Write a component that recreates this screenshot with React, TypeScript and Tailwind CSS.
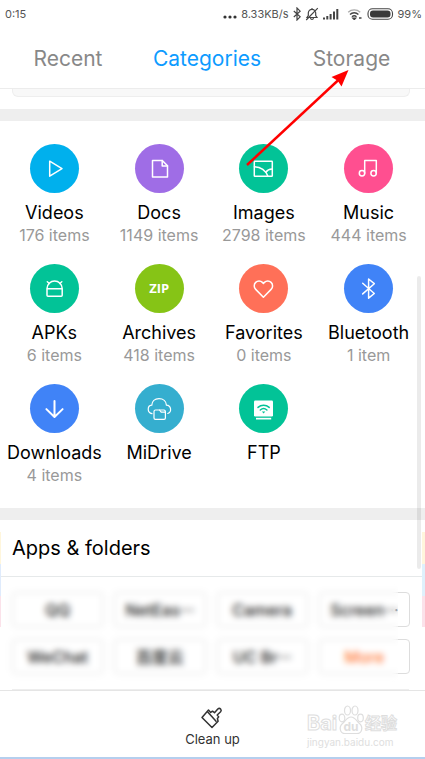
import { useState } from "react"
import type { ReactNode } from "react"
import { clsx } from "clsx"

interface Category {
  name: string
  count?: string
  color: string
  icon: ReactNode
}

const TABS = ["Recent", "Categories", "Storage"]

const FOLDERS = ["QQ", "NetEas···", "Camera", "Screen···", "WeChat", "百度云", "UC Br···", "More"]

const Glyph = ({ children }: { children: ReactNode }) => (
  <svg
    viewBox="0 0 49 49"
    className="size-full"
    fill="none"
    stroke="#fff"
    strokeWidth="1.5"
    strokeLinecap="round"
    strokeLinejoin="round"
    aria-hidden="true"
  >
    {children}
  </svg>
)

const CATEGORIES: Category[] = [
  {
    name: "Videos",
    count: "176 items",
    color: "bg-[#00b0ed]",
    icon: (
      <Glyph>
        <path d="M19.7 17.2v15l12.3-7.5z" />
      </Glyph>
    ),
  },
  {
    name: "Docs",
    count: "1149 items",
    color: "bg-[#9f6de6]",
    icon: (
      <Glyph>
        <path d="M17.5 16.5h9.8l5.2 5.3v11.2h-15z" />
        <path d="M27.2 16.5v5.4h5.3" />
      </Glyph>
    ),
  },
  {
    name: "Images",
    count: "2798 items",
    color: "bg-[#02c397]",
    icon: (
      <Glyph>
        <rect x="15.3" y="17.3" width="18" height="15" rx="0.6" />
        <path d="M15.5 22.8c6.5.4 11 3.4 13.3 9.2" />
        <path d="M26.8 28.3c1.5-2.2 3.5-3.2 6.3-3.3" />
      </Glyph>
    ),
  },
  {
    name: "Music",
    count: "444 items",
    color: "bg-[#ff4f90]",
    icon: (
      <Glyph>
        <path d="M20.7 29.3V16.4h11.6v12.9" />
        <circle cx="18" cy="29.2" r="2.7" />
        <circle cx="29.6" cy="29.2" r="2.7" />
      </Glyph>
    ),
  },
  {
    name: "APKs",
    count: "6 items",
    color: "bg-[#02c397]",
    icon: (
      <Glyph>
        <path d="M17 24.6a7.6 7.6 0 0 1 15.2 0v6.7q0 1-1 1H18q-1 0-1-1zM17 24.8h15.2" />
        <path d="M17.3 17.8l2 1.7M31.8 17.8l-2 1.7" />
      </Glyph>
    ),
  },
  {
    name: "Archives",
    count: "418 items",
    color: "bg-[#86c416]",
    icon: <span className="font-['Open_Sans',sans-serif] text-[13px] font-bold text-white">ZIP</span>,
  },
  {
    name: "Favorites",
    count: "0 items",
    color: "bg-[#ff7058]",
    icon: (
      <Glyph>
        <path d="M24.4 33.2l-7.7-7.8a4.9 4.9 0 0 1 0-7 4.7 4.7 0 0 1 6.7 0l1 1 1-1a4.7 4.7 0 0 1 6.7 0 4.9 4.9 0 0 1 0 7z" />
      </Glyph>
    ),
  },
  {
    name: "Bluetooth",
    count: "1 item",
    color: "bg-[#4083f7]",
    icon: (
      <Glyph>
        <path d="M18.7 19.3l11.6 10.2-5.7 4.7V15l5.7 4.7-11.6 10.2" />
      </Glyph>
    ),
  },
  {
    name: "Downloads",
    count: "4 items",
    color: "bg-[#4083f7]",
    icon: (
      <Glyph>
        <path strokeWidth="2" d="M24.5 17v15.8M16.4 25.1l8.1 7.9 8.1-7.9" />
      </Glyph>
    ),
  },
  {
    name: "MiDrive",
    color: "bg-[#35aecf]",
    icon: (
      <Glyph>
        <path strokeWidth="1.2" d="M17 29.6c-5-.8-5-8-.2-8.4.1-4 3-6.6 7.2-6.6s7.2 2.6 7.4 6.5c5 .3 5.6 7.1 1.4 8.4" />
        <path strokeWidth="1.2" d="M20.5 26h4l1.7 2.2h4.2v5.7q0 1.4-1.4 1.4h-8.600q-1.400 0-1.400-1.400v-6.500q0-1.400 1.500-1.400z" />
        <path strokeWidth="1.2" d="M24.5 26H29q1.4 0 1.4 2.2" />
      </Glyph>
    ),
  },
  {
    name: "FTP",
    color: "bg-[#02c397]",
    icon: (
      <Glyph>
        <rect x="15" y="16.5" width="19" height="16" rx="1.2" fill="#fff" stroke="none" />
        <path d="M17 33.8h15.2v1.7H17z" fill="#fff" stroke="none" />
        <path stroke="#02c397" d="M19 23.4a8.5 8.5 0 0 1 11.2 0M21.3 26a5 5 0 0 1 6.6 0" />
        <path d="M22.9 27.4h3.4l-1.7 2.2z" fill="#02c397" stroke="none" />
      </Glyph>
    ),
  },
]

const StatusBar = () => (
  <div className="flex h-7 items-center justify-between pr-[3px] pl-[5px] text-[11px] text-[#555]">
    <span>0:15</span>
    <div className="flex items-center gap-1">
      <svg viewBox="0 0 14 12" className="h-3 w-[14px]" fill="#333" aria-hidden="true">
        <circle cx="2" cy="9" r="1.6" />
        <circle cx="7" cy="9" r="1.6" />
        <circle cx="12" cy="9" r="1.6" />
      </svg>
      <span>8.33KB/s</span>
      <svg viewBox="0 0 8 14" className="h-[14px] w-2" fill="none" stroke="#444" strokeWidth="1.2" aria-hidden="true">
        <path d="M.8 4l6.4 5.8L4 13V1l3.2 3.2L.8 10" />
      </svg>
      <svg viewBox="0 0 14 14" className="size-[14px]" fill="none" stroke="#444" strokeWidth="1.2" aria-hidden="true">
        <path d="M2 10.5h10l-1.3-2V6a3.7 3.7 0 0 0-7.4 0v2.5zM5.5 11c.3 1.8 2.7 1.8 3 0M7 1v1.3M12.8 1.2L1.2 13" />
      </svg>
      <svg viewBox="0 0 16 12" className="h-3 w-4" fill="#444" aria-hidden="true">
        <path d="M0 9.5h2v2H0zM3.3 8h2v3.5h-2zM6.6 6h2v5.5h-2zM10 3.5h2v8h-2zM13.3 1h2v10.5h-2z" />
      </svg>
      <svg viewBox="0 0 16 12" className="ml-1 h-3 w-4" fill="none" stroke="#444" strokeWidth="1.4" aria-hidden="true">
        <path stroke="#aaa" d="M1.2 4.2a9 9 0 0 1 12 0" />
        <path d="M3 6.5a6 6 0 0 1 8.4 0M5 8.8a3.2 3.2 0 0 1 4.5 0" />
        <path d="M6 10.2h2.5l-1.2 1.3zM12 10h2.5" />
      </svg>
      <svg viewBox="0 0 27 12" className="h-3 w-[27px]" aria-hidden="true">
        <rect x="1" y=".8" width="24.5" height="10.4" rx="4.5" fill="none" stroke="#444" strokeWidth="1.1" />
        <rect x="3" y="2.6" width="20.5" height="6.8" rx="3" fill="#3a3a3a" />
      </svg>
      <span>99%</span>
    </div>
  </div>
)

const CategoryItem = ({ category }: { category: Category }) => (
  <button type="button" className="flex h-[120px] flex-col items-center whitespace-nowrap">
    <span className={clsx("flex size-[49px] shrink-0 items-center justify-center rounded-full", category.color)}>
      {category.icon}
    </span>
    <span className="mt-2 text-[18px] leading-6 text-black">{category.name}</span>
    {category.count && <span className="text-[16px] leading-5 text-[#999]">{category.count}</span>}
  </button>
)

const Watermark = () => (
  <div className="pointer-events-none absolute right-7 bottom-2 flex w-[90px] flex-col text-[#dedede]">
    <div className="flex items-end justify-between font-bold text-white [-webkit-text-stroke:1px_#dedede]">
      <span className="text-[20px] leading-6">Bai</span>
      <svg
        viewBox="0 0 26 30"
        className="h-[30px] w-[26px] [-webkit-text-stroke:0]"
        fill="#fff"
        stroke="#dedede"
        strokeWidth="1.2"
      >
        <ellipse cx="4" cy="13" rx="2.8" ry="3.8" />
        <ellipse cx="9.5" cy="5.5" rx="3" ry="4.5" />
        <ellipse cx="17" cy="5.5" rx="3" ry="4.5" />
        <ellipse cx="22.5" cy="13" rx="2.8" ry="3.8" />
        <path d="M13 12c-4 0-5.5 4-8.5 6.5-4 3.5-2.5 10 2.5 10h12c5 0 6.5-6.5 2.5-10C18.5 16 17 12 13 12z" />
        <text x="13" y="26" textAnchor="middle" fontSize="12" fontWeight="700" fill="#dedede" stroke="none">
          du
        </text>
      </svg>
      <span className="text-[16px] leading-6">经验</span>
    </div>
    <span className="text-[10px] leading-[14px]">jingyan.baidu.com</span>
  </div>
)

export default function App() {
  const [activeTab, setActiveTab] = useState("Categories")

  return (
    <div className="relative flex min-h-screen flex-col overflow-hidden bg-white font-['Inter','Noto_Sans_CJK_SC',sans-serif]">
      <StatusBar />

      <nav className="grid h-[61px] grid-cols-[136px_1fr_147px] border-b border-[#ececec] pt-[2px]">
        {TABS.map((tab) => (
          <button
            key={tab}
            type="button"
            onClick={() => setActiveTab(tab)}
            className={clsx("text-[21px]", activeTab === tab ? "text-[#0d9bff]" : "text-[#888]")}
          >
            {tab}
          </button>
        ))}
      </nav>

      <main>
        <div className="mr-[15px] ml-3 h-2 rounded-b-md border border-t-0 border-[#eee] bg-[#f8f8f8]" />
        <div className="mt-3 h-3 bg-[#eee]" />

        <section className="grid grid-cols-4 pt-[23px] pr-1 pl-[2px]">
          {CATEGORIES.map((category) => (
            <CategoryItem key={category.name} category={category} />
          ))}
        </section>

        <div className="mt-1 h-3 bg-[#eee]" />

        <section className="relative">
          <h2 className="border-b border-[#e6e9ea] px-3 py-4 text-[20px] leading-6 text-black">Apps &amp; folders</h2>
          <div className="grid grid-cols-4 gap-x-[11px] gap-y-3 pt-[15px] pr-[15px] pb-[15px] pl-3">
            {FOLDERS.map((folder) => (
              <button
                key={folder}
                type="button"
                className={clsx(
                  "flex h-[35px] items-center justify-center rounded-sm border border-[#ddd] text-[16px] font-medium whitespace-nowrap",
                  folder === "More" ? "text-[#ff6a1a]" : "text-black"
                )}
              >
                {folder}
              </button>
            ))}
          </div>
          <div className="mr-4 ml-3 border-b border-[#eee]" />
          {/* frosted cover over the folder names */}
          <div className="pointer-events-none absolute top-[58px] right-[27px] bottom-1 left-0 bg-white/10 backdrop-blur-[3px]" />
        </section>
      </main>

      <footer className="relative mt-auto flex justify-center border-t border-b-2 border-t-[#e5e5e5] border-b-[#b5cfee] bg-white">
        <button type="button" className="flex h-[66px] flex-col items-center pt-[14px] text-[13px] leading-5 text-[#333]">
          <svg
            viewBox="0 0 24 24"
            className="size-6"
            fill="none"
            stroke="#333"
            strokeWidth="1.5"
            strokeLinejoin="round"
            aria-hidden="true"
          >
            <path d="M8.5 5l2.2 2.4 1.8-1.2 2 1.5 3.3-3.7q1.5-1.3 2.8 0 1.2 1.4 0 2.8l-3.4 3.2 1.5 1.9-1.3 1.6.7 2.7-6.1 6.3L2 12.5z" />
            <path d="M7.3 6.5l9.2 10.3" />
          </svg>
          Clean up
        </button>
        <Watermark />
      </footer>

      {/* scroll position */}
      <div className="absolute top-[276px] right-1 h-[293px] w-1 rounded-sm bg-black/8" />

      <div className="absolute top-[532px] right-0 flex w-[3px] flex-col">
        <span className="h-8 bg-[#fff6dc]" />
        <span className="h-8 bg-[#dff1fc]" />
        <span className="h-[31px] bg-[#fbe2ea]" />
      </div>
      <div className="absolute top-[532px] left-0 flex w-px flex-col">
        <span className="h-8 bg-[#fff6dc]" />
        <span className="h-8 bg-[#dfebfc]" />
        <span className="h-[31px] bg-[#fbe2ea]" />
      </div>

      <svg
        viewBox="0 0 104 98"
        className="pointer-events-none absolute top-[69px] left-[246px] h-[98px] w-[104px]"
        fill="#f00"
        aria-hidden="true"
      >
        <path d="M1 96L94 9.5" stroke="#f00" strokeWidth="2.4" />
        <path d="M102.5 1L95.5 17.5l-3.8-5.8-6.2-3.6z" />
      </svg>
    </div>
  )
}
